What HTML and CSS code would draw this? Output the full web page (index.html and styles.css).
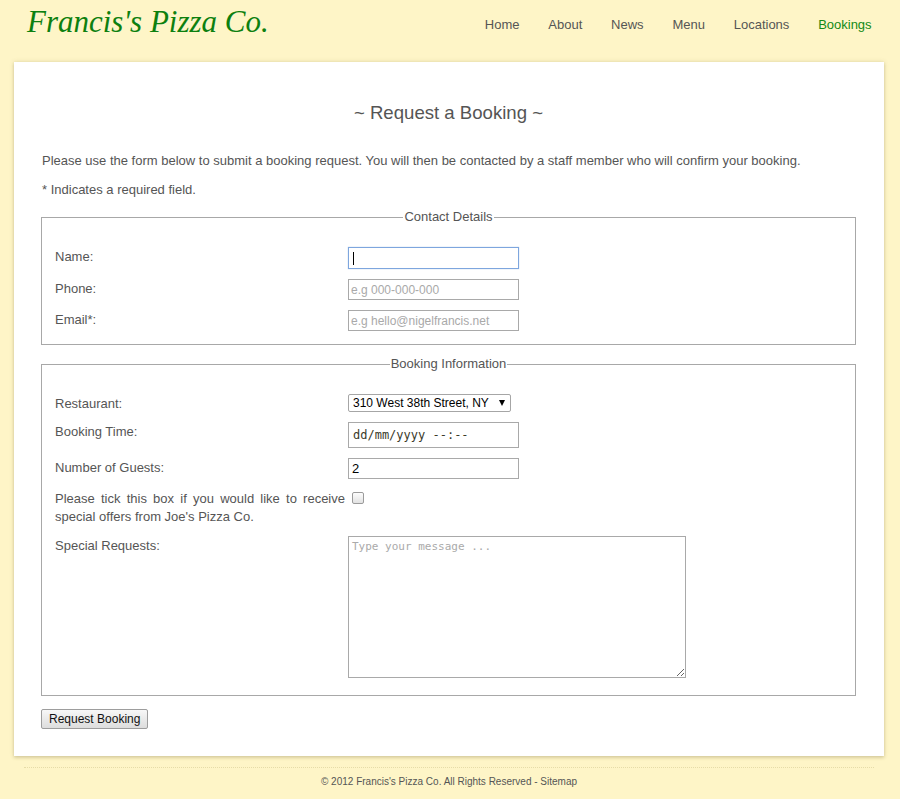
FILE: index.html
```html
<!DOCTYPE html>
<html lang="en">
<head>
<meta charset="utf-8">
<title>Francis's Pizza Co. - Bookings</title>
<link rel="stylesheet" href="styles.css">
</head>
<body>
<header class="site-header">
  <h1 class="logo">Francis's Pizza Co.</h1>
  <nav class="main-nav">
    <a href="#">Home</a>
    <a href="#">About</a>
    <a href="#">News</a>
    <a href="#">Menu</a>
    <a href="#">Locations</a>
    <a href="#" class="is-active">Bookings</a>
  </nav>
</header>

<main class="card">
  <h2 class="page-title">~ Request a Booking ~</h2>
  <p class="intro">Please use the form below to submit a booking request. You will then be contacted by a staff member who will confirm your booking.</p>
  <p class="intro intro--last">* Indicates a required field.</p>

  <form class="booking-form">
    <fieldset class="group">
      <legend class="group-title">Contact Details</legend>
      <div class="row">
        <label class="row-label" for="name">Name:</label>
        <input class="field is-focused" id="name" type="text">
      </div>
      <div class="row">
        <label class="row-label" for="phone">Phone:</label>
        <input class="field" id="phone" type="text" placeholder="e.g 000-000-000">
      </div>
      <div class="row row--last">
        <label class="row-label" for="email">Email*:</label>
        <input class="field" id="email" type="text" placeholder="e.g hello@nigelfrancis.net">
      </div>
    </fieldset>

    <fieldset class="group group--booking">
      <legend class="group-title">Booking Information</legend>
      <div class="row row--select">
        <label class="row-label" for="restaurant">Restaurant:</label>
        <span class="select-wrap">
          <select class="select" id="restaurant">
            <option>310 West 38th Street, NY</option>
          </select>
        </span>
      </div>
      <div class="row">
        <label class="row-label" for="time">Booking Time:</label>
        <input class="field field--datetime" id="time" type="text" value="dd/mm/yyyy --:--">
      </div>
      <div class="row">
        <label class="row-label" for="guests">Number of Guests:</label>
        <input class="field field--number" id="guests" type="text" value="2">
      </div>
      <div class="row">
        <label class="row-label" for="offers">Please tick this box if you would like to receive special offers from Joe's Pizza Co.</label>
        <input class="checkbox" id="offers" type="checkbox">
      </div>
      <div class="row row--last">
        <label class="row-label" for="requests">Special Requests:</label>
        <textarea class="message" id="requests" placeholder="Type your message ..."></textarea>
      </div>
    </fieldset>

    <button class="submit" type="button">Request Booking</button>
  </form>
</main>

<footer class="site-footer">
  © 2012 Francis's Pizza Co. All Rights Reserved - <a href="#">Sitemap</a>
</footer>
</body>
</html>
```

FILE: styles.css
```css
* { box-sizing: border-box; }

body {
  margin: 0;
  background: #fef5c7;
  font-family: "Liberation Sans", Arial, sans-serif;
  font-size: 13px;
  color: #555;
}

.site-header {
  display: flex;
  justify-content: space-between;
  align-items: flex-start;
  height: 62px;
  padding: 0 14px 0 27px;
}

.logo {
  margin: 0;
  padding-top: 6px;
  font: italic 31px/1 "Liberation Serif", "Times New Roman", serif;
  color: #0d800f;
}

.main-nav {
  display: flex;
  padding-top: 17px;
}

.main-nav a {
  padding: 0 14.4px;
  line-height: 16px;
  color: #555;
  text-decoration: none;
}

.main-nav a.is-active { color: #138a16; }

.card {
  display: block;
  margin: 0 16px 0 14px;
  padding: 39px 28px 27px 27px;
  background: #fff;
  box-shadow: 0 0 4px rgba(120, 110, 60, 0.25), 0 2px 3px rgba(120, 110, 60, 0.2);
}

.page-title {
  margin: 0 0 28px;
  font-size: 18.6px;
  font-weight: normal;
  line-height: 24px;
  text-align: center;
  color: #555;
}

.intro {
  margin: 0 0 13px;
  padding-left: 1px;
  line-height: 16px;
}

.intro--last { margin-bottom: 11px; }

.group {
  margin: 0 0 11px;
  padding: 22px 13px 3px;
  border: 1px solid #a8a8a8;
  min-width: 0;
}

.group--booking {
  padding-top: 22px;
  margin-bottom: 13px;
}

.group-title {
  margin: 0 auto;
  padding: 0 1px;
  line-height: 16px;
  color: #555;
}

.row {
  display: flex;
  align-items: flex-start;
  margin-bottom: 10px;
}

.row--select { margin-bottom: 9px; }
.row--last { margin-bottom: 10px; }
.group--booking .row--last { margin-bottom: 14px; }

.row-label {
  flex: none;
  width: 293px;
  padding: 1px 3px 0 0;
  line-height: 18px;
  text-align: justify;
}

.field {
  width: 171px;
  height: 21px;
  margin: 0;
  padding: 1px 2px;
  border: 1px solid #a9a9a9;
  font: 12px "Liberation Sans", Arial, sans-serif;
  color: #000;
  background: #fff;
  outline: none;
}

.field::placeholder { color: #a9a9a9; }

.field.is-focused {
  height: 22px;
  border-color: #7ea6de;
  box-shadow: 0 0 1px rgba(90, 140, 220, 0.5);
  background: #fff linear-gradient(#000, #000) no-repeat 4px 4px / 1px 13px;
}

.field--datetime {
  height: 26px;
  padding: 0 4px;
  font: 12px "DejaVu Sans Mono", monospace;
  color: #3a3a2a;
}

.field--number {
  padding: 1px 3px;
  font-size: 13px;
}

.select-wrap {
  position: relative;
  display: inline-block;
}

.select {
  display: block;
  width: 163px;
  height: 18px;
  margin: 0;
  padding: 0 4px;
  border: 1px solid #a6a6a6;
  border-radius: 2px;
  appearance: none;
  -webkit-appearance: none;
  background: #fff;
  font: 12px/16px "Liberation Sans", Arial, sans-serif;
  color: #000;
}

.select-wrap::after {
  content: "";
  position: absolute;
  right: 6px;
  top: 6px;
  border-left: 3.5px solid transparent;
  border-right: 3.5px solid transparent;
  border-top: 6px solid #000;
  pointer-events: none;
}

.checkbox {
  appearance: none;
  -webkit-appearance: none;
  width: 12px;
  height: 12px;
  margin: 3px 0 0 4px;
  border: 1px solid #9b9b9b;
  border-radius: 2px;
  background: linear-gradient(#fdfdfd, #e2e2e2);
}

.message {
  width: 338px;
  height: 142px;
  margin: 0;
  padding: 3px 3px;
  border: 1px solid #a9a9a9;
  font: 11px/13px "DejaVu Sans Mono", monospace;
  color: #000;
  resize: both;
}

.message::placeholder { color: #aaa; }

.submit {
  display: block;
  height: 20px;
  margin: 0;
  padding: 0 7px;
  border: 1px solid #9d9d9d;
  border-radius: 2px;
  background: linear-gradient(#f7f7f7, #dddddd);
  font: 12px/16px "Liberation Sans", Arial, sans-serif;
  color: #111;
}

.site-footer {
  margin: 11px 26px 0 24px;
  padding-top: 7px;
  border-top: 1px dotted #e6dca8;
  text-align: center;
  font-size: 10px;
  line-height: 13px;
  color: #555;
}

.site-footer a {
  color: #555;
  text-decoration: none;
}
```
